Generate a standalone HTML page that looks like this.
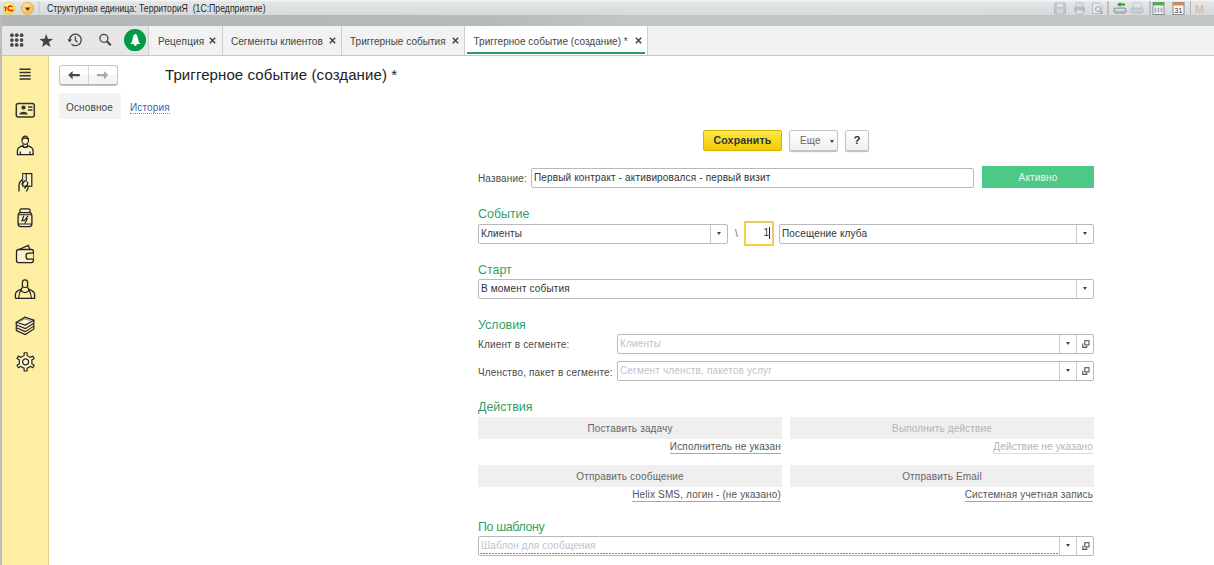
<!DOCTYPE html>
<html><head><meta charset="utf-8">
<style>
*{box-sizing:border-box;margin:0;padding:0}
html,body{width:1214px;height:565px;overflow:hidden;background:#fff;font-family:"Liberation Sans",sans-serif;font-size:10px;color:#333;letter-spacing:0.15px}
.abs{position:absolute}
#titlebar{left:0;top:0;width:1214px;height:15px;background:linear-gradient(#f6f7f8 0,#e4e7e8 2px,#d5d8d9 16px)}
#stripe{left:0;top:15px;width:1214px;height:11px;background:linear-gradient(90deg,#b2b6b7 0,#b6babb 40%,#c3c6c7 52%,#c2c5c6 100%)}
#toolbar{left:0;top:26px;width:1214px;height:30px;background:#f2f2f2;border-bottom:1px solid #c6c6c6}
#tbicons{left:0;top:26px;width:149px;height:29px;background:#e6e6e6;border-right:1px solid #cfcfcf}
#leftline{left:0;top:15px;width:2px;height:550px;background:#bcbcbc}
#sidebar{left:2px;top:56px;width:47px;height:509px;background:#fdeea2;border-right:1px solid #ddd08e}
.tab{position:absolute;top:26px;height:29px;border-right:1px solid #cfcfcf;line-height:30px;font-size:10px;color:#444;white-space:nowrap}
.tt{top:36px;font-size:10px;color:#444;white-space:nowrap;line-height:12px}
.hdr{position:absolute;left:478px;font-size:13.5px;color:#2f9f6a;margin-top:1px;letter-spacing:0;transform:scaleX(0.92);transform-origin:0 0;white-space:nowrap}
.lbl{position:absolute;font-size:10px;color:#4a4a4a;white-space:nowrap;margin-top:1px}
.inp{position:absolute;height:20px;border:1px solid #b9b9b9;border-radius:2px;background:#fff;font-size:10px;color:#333;line-height:18px;padding-left:2px;white-space:nowrap;overflow:hidden}
.dd{position:absolute;top:0;right:0;width:17px;height:18px;border-left:1px solid #c9c9c9}
.dd:after{content:"";position:absolute;left:5.5px;top:7px;border-left:2.5px solid transparent;border-right:2.5px solid transparent;border-top:3px solid #444}
.ph{color:#c0c3c8}
.dd2{position:absolute;top:0;right:17px;width:17px;height:18px;border-left:1px solid #c9c9c9}
.dd2:after{content:"";position:absolute;left:5.5px;top:7px;border-left:2.5px solid transparent;border-right:2.5px solid transparent;border-top:3px solid #444}
.op{position:absolute;top:0;right:0;width:17px;height:18px;border-left:1px solid #c9c9c9}
.abtn{position:absolute;height:22px;background:#efefef;text-align:center;line-height:23px;font-size:10px;color:#666}
.lnk{position:absolute;font-size:10px;color:#555;white-space:nowrap;line-height:12px;border-bottom:1px solid #a8a8a8}
</style></head><body>
<div id="titlebar" class="abs"></div>
<div id="stripe" class="abs"></div>
<div id="toolbar" class="abs"></div>
<div id="tbicons" class="abs"></div>
<div id="sidebar" class="abs"></div>
<div id="leftline" class="abs"></div>


<!-- titlebar icons -->
<svg class="abs" style="left:0;top:0" width="45" height="16" viewBox="0 0 45 16">
<defs><radialGradient id="g1c" cx="0.4" cy="0.3" r="0.8"><stop offset="0" stop-color="#fffbb0"/><stop offset="1" stop-color="#f5d600"/></radialGradient>
<radialGradient id="gdd" cx="0.4" cy="0.3" r="0.8"><stop offset="0" stop-color="#ffe49a"/><stop offset="1" stop-color="#f5b040"/></radialGradient></defs>
<circle cx="9" cy="8.3" r="6" fill="url(#g1c)" stroke="#e8c860" stroke-width="0.6"/>
<path d="M4.3 6.9 L6.4 5.9 L6.4 10.9 L4.9 10.9 L4.9 7.7 L4.3 7.9 Z" fill="#e3211b"/>
<path d="M12.2 7.2 A2.25 2.25 0 1 0 10 10.5 L13.4 10.5" fill="none" stroke="#e3211b" stroke-width="1.5"/>
<circle cx="27.5" cy="8.3" r="6.2" fill="url(#gdd)" stroke="#d9a850" stroke-width="0.6"/>
<path d="M24.8 7.6 L30.4 7.6 L27.6 10.9 Z" fill="#4a3a20"/>
<rect x="38.5" y="1" width="1" height="13" fill="#c4c6c8"/>
</svg>

<!-- right titlebar icons -->
<svg class="abs" style="left:1050px;top:0" width="164" height="16" viewBox="0 0 164 16">
<g opacity="0.55">
<rect x="4.5" y="3" width="11" height="11" rx="1" fill="#a9b6c6" stroke="#8a98a8" stroke-width="1"/>
<rect x="7" y="3.5" width="6" height="3.5" fill="#dfe5ec"/><rect x="7" y="9.5" width="6" height="4" fill="#c8d2dc"/>
<rect x="24" y="7" width="11" height="5" rx="1" fill="#98a4b0"/><rect x="26" y="3" width="7" height="4" fill="#dde3ea" stroke="#8a98a8" stroke-width="0.8"/><rect x="26" y="10" width="7" height="4" fill="#e8ecf0" stroke="#8a98a8" stroke-width="0.8"/>
<path d="M42.5 3 L49 3 L52 6 L52 13.5 L42.5 13.5 Z" fill="#eef1f4" stroke="#8a98a8" stroke-width="0.9"/>
<circle cx="48" cy="9" r="2.5" fill="none" stroke="#6a7888" stroke-width="1"/><path d="M49.8 10.8 L52.5 13.5" stroke="#6a7888" stroke-width="1.3"/>
</g>
<rect x="57.5" y="1" width="1" height="14" fill="#9aa0a6"/>
<rect x="64" y="8" width="12" height="5" rx="1.5" fill="#b8c0c8" stroke="#808890" stroke-width="0.8"/>
<path d="M66 9.8 H74" stroke="#fff" stroke-width="0.8"/>
<path d="M67 4.5 L70.5 2 L70.5 3.5 L75 3.5 L75 5.5 L70.5 5.5 L70.5 7 Z" fill="#28a028"/>
<g opacity="0.45"><rect x="81" y="8" width="12" height="5" rx="1.5" fill="#b8c0c8" stroke="#808890" stroke-width="0.8"/>
<path d="M83 3 L90 3 L92 5 L92 8 L83 8 Z" fill="#e8ecf0" stroke="#8a98a8" stroke-width="0.8"/></g>
<rect x="99.5" y="1" width="1" height="14" fill="#9aa0a6"/>
<rect x="103" y="2.5" width="11" height="12" fill="#f4f6f8" stroke="#7a8490" stroke-width="0.9"/>
<rect x="103" y="2.5" width="11" height="3" fill="#3cb84a"/>
<path d="M105.5 7 V13.5 M108.5 7 V13.5 M111.5 7 V13.5 M104 9 H113 M104 11 H113" stroke="#8a94a0" stroke-width="0.6"/>
<rect x="123" y="2.5" width="11" height="12" fill="#f8f8f8" stroke="#7a8490" stroke-width="0.9"/>
<rect x="123" y="2.5" width="11" height="3" fill="#e08a40"/>
<text x="128.5" y="12.8" font-size="7" text-anchor="middle" fill="#333" font-family="Liberation Sans">31</text>
<rect x="140" y="1" width="1" height="14" fill="#b0b4b8"/>
<text x="145" y="13" font-size="11" font-weight="bold" fill="#d8b8b0" font-family="Liberation Sans">M</text>
</svg>

<!-- toolbar icons -->
<svg class="abs" style="left:0;top:26px" width="149" height="29" viewBox="0 26 149 29">
<g fill="#444">
<circle cx="11.9" cy="35.2" r="1.85"/><circle cx="16.7" cy="35.2" r="1.85"/><circle cx="21.6" cy="35.2" r="1.85"/>
<circle cx="11.9" cy="40.1" r="1.85"/><circle cx="16.7" cy="40.1" r="1.85"/><circle cx="21.6" cy="40.1" r="1.85"/>
<circle cx="11.9" cy="44.9" r="1.85"/><circle cx="16.7" cy="44.9" r="1.85"/><circle cx="21.6" cy="44.9" r="1.85"/>
<path d="M46.20 34.00 L47.93 38.81 L53.05 38.98 L49.01 42.11 L50.43 47.02 L46.20 44.15 L41.97 47.02 L43.39 42.11 L39.35 38.98 L44.47 38.81 Z"/>
</g>
<g fill="none" stroke="#444" stroke-width="1.3">
<path d="M69.7 39.6 A5.8 5.8 0 1 1 71.4 44"/>
<path d="M75.4 36.2 V40.2 L77.4 42.2"/>
<circle cx="103.9" cy="38.3" r="4"/>
</g>
<path d="M67.3 39.2 L72.1 39.2 L69.7 42.4 Z" fill="#444"/>
<path d="M106.8 41.3 L110.8 45.3" stroke="#444" stroke-width="2.2"/>
<circle cx="135" cy="40.1" r="11" fill="#009b48"/>
<path d="M135.3 33.9 C134.2 33.9 133.5 35 133.1 37 L132 41.6 C131.7 42.7 131 43.4 130.1 44 L140.6 44 C139.7 43.4 139 42.7 138.7 41.6 L137.6 37 C137.2 35 136.5 33.9 135.3 33.9 Z M133.7 44 L137 44 C136.8 45.2 136 45.9 135.35 45.9 C134.7 45.9 133.9 45.2 133.7 44 Z" fill="#fff"/>
</svg>

<!-- sidebar icons -->
<svg class="abs" style="left:0;top:56px" width="48" height="330" viewBox="0 56 48 330">
<g stroke="#333" fill="none" stroke-width="1.3">
<path d="M19.5 69.2 H30.7 M19.5 72.5 H30.7 M19.5 75.7 H30.7 M19.5 79 H30.7" stroke-width="1.4"/>
<rect x="16.3" y="103.5" width="18" height="13.5" rx="2" stroke-width="1.5"/>
<path d="M28 107 H32.5 M28 110 H32.5" stroke-width="1.3"/>
</g>
<g fill="#333">
<circle cx="23.5" cy="107.6" r="2.1"/>
<path d="M19.3 114.6 C19.6 110.9 27.4 110.9 27.7 114.6 Z"/>
</g>
<g stroke="#222" fill="none" stroke-width="1.1">
<path d="M17.4 154.6 L17.5 150 C17.8 147.6 19.8 146.6 22.6 145.8 C23.5 147.8 27 147.8 27.9 145.8 C30.7 146.6 32.7 147.6 33 150 L33.1 154.6 Z" fill="#fdf6d2" stroke-width="1.3"/>
<path d="M22.6 145.8 C23.5 148.4 27 148.4 27.9 145.8" stroke-width="1.1"/>
<path d="M23 144 V146.2 M27.5 144 V146.2" stroke-width="1"/>
<ellipse cx="25.25" cy="140.3" rx="3.3" ry="4.1" fill="#fdf4c4" stroke-width="1.2"/>
<path d="M22.2 139.5 C23 137.5 27.5 137.5 28.3 139.5" stroke-width="1.3"/>
<path d="M20.4 154.6 V151.6 M29.9 154.6 V151.6" stroke-width="1.2"/>
</g>
<g stroke="#222" fill="none" stroke-width="1.1">
<rect x="22.8" y="173.6" width="9" height="12.6" fill="#fdf4c4" stroke-width="1.2"/>
<rect x="23.4" y="174.2" width="2.2" height="8" fill="#e8e2c0" stroke="none"/>
<path d="M26.3 173.6 V181" stroke-width="1.1"/>
<path d="M19 191.5 V185.5 C19 183 20.5 181 22.3 179.5" stroke-width="1.3"/>
<path d="M21.5 184.5 L24.5 181.2 C25.2 180.5 26 180.8 26 181.6" stroke-width="1.3"/>
<path d="M24.5 188.5 L27.5 184.5 C28.2 183.2 27.6 182 26.8 181.8" stroke-width="1.3"/>
<path d="M26.3 191.5 L27.9 188.6 C28.4 187.6 28 186.8 27.3 186.5" stroke-width="1.2"/>
</g>
<g stroke="#222" fill="none" stroke-width="1.2">
<rect x="19.9" y="208.8" width="10.2" height="3.8" rx="1.6" fill="#f6eec8" stroke-width="1.2"/>
<path d="M19.6 212.6 H30.4 C31.6 213.2 31.9 214.5 31.9 216 V223.5 C31.9 225.8 30.8 226.7 29 226.7 H21 C19.2 226.7 18.1 225.8 18.1 223.5 V216 C18.1 214.5 18.4 213.2 19.6 212.6 Z" fill="#fbf0bb" stroke-width="1.3"/>
<path d="M18.3 214.8 H31.7 M18.3 224 H31.7" stroke-width="1.1"/>
<path d="M23.8 215.6 L22 220.8 L25.2 220.2 M28 215.8 L25.6 219 L27.2 219 L24.6 223.5" stroke-width="1.2"/>
</g>
<g stroke="#222" fill="none" stroke-width="1.3">
<path d="M19 249.5 L28.3 245.3 L29.8 249.5" fill="#fbf2c6"/>
<path d="M16.5 251.5 C16.5 250 17.5 249.5 19 249.5 L31.5 249.5 C32.8 249.5 33.4 250.5 33.4 251.5 L33.4 260.8 C33.4 262 32.6 262.6 31.5 262.6 L18.5 262.6 C17.2 262.6 16.5 262 16.5 260.8 Z" fill="#fbf2c6"/>
<path d="M33.4 253.2 L28.5 253.2 C26.7 253.2 26 254.5 26 256.2 C26 258 26.7 259.2 28.5 259.2 L33.4 259.2" fill="#fdeea2"/>
</g>
<g stroke="#222" fill="none" stroke-width="1.2">
<path d="M22.4 287.6 V282.6 C22.4 280.6 23.5 279.9 25 279.9 C26.5 279.9 27.6 280.6 27.6 282.6 V287.6" stroke-width="1.3"/>
<path d="M15.4 298.3 V294.3 C15.6 291.6 17.6 290.4 21.1 289.3 C21.6 288.6 22 288.2 22.4 287.6 M27.6 287.6 C28 288.2 28.4 288.6 28.9 289.3 C32.4 290.4 34.4 291.6 34.6 294.3 V298.3 H15.4" stroke-width="1.3"/>
<path d="M21.1 289.3 C21.6 293.6 28.4 293.6 28.9 289.3" stroke-width="1.2"/>
<path d="M22.5 286.2 C23.2 287.9 26.8 287.9 27.5 286.2" stroke-width="1.1"/>
<path d="M21.1 289.6 C19.6 292 18.9 295 18.6 298.3 M28.9 289.6 C30.4 292 31.1 295 31.4 298.3" stroke-width="1.1"/>
</g>
<g stroke="#222" fill="none" stroke-width="1.1">
<path d="M16.3 322.2 V330.6 L25.3 334.5 L33.8 329 V320.2" fill="#fbefb8" stroke-width="1.2"/>
<path d="M16.3 325 L25.3 328.6 L33.8 323.2 M16.3 327.8 L25.3 331.6 L33.8 326.1" stroke-width="1.1"/>
<path d="M16.3 322.2 L24.9 317.2 L33.8 320.2 L25.3 325 Z" fill="#fdf6d4" stroke-width="1.2"/>
<path d="M19.5 321.5 L25 318.8 L30.5 320.7" stroke-width="0.8" stroke="#666"/>
</g>
<g stroke="#222" fill="#fdf4c8" stroke-width="1.15" stroke-linejoin="round" transform="translate(25.6 361.9)">
<path d="M-1.50 -6.20 L-1.45 -9.10 L1.45 -9.10 L1.50 -6.20 A6.2 6.2 0 0 1 4.62 -4.40 L7.16 -5.81 L8.61 -3.29 L6.12 -1.80 A6.2 6.2 0 0 1 6.12 1.80 L8.61 3.29 L7.16 5.81 L4.62 4.40 A6.2 6.2 0 0 1 1.50 6.20 L1.45 9.10 L-1.45 9.10 L-1.50 6.20 A6.2 6.2 0 0 1 -4.62 4.40 L-7.16 5.81 L-8.61 3.29 L-6.12 1.80 A6.2 6.2 0 0 1 -6.12 -1.80 L-8.61 -3.29 L-7.16 -5.81 L-4.62 -4.40 A6.2 6.2 0 0 1 -1.50 -6.20 Z"/>
<circle cx="0" cy="0" r="3" fill="none" stroke-width="1.2"/>
</g>
</svg>



<!-- title bar -->
<div class="abs" style="left:47px;top:1.8px;font-size:11px;color:#2a2a2a;line-height:12px;white-space:nowrap;transform:scaleX(0.79);letter-spacing:0;transform-origin:0 0">Структурная единица: ТерриториЯ&nbsp; (1С:Предприятие)</div>

<!-- tabs -->
<div class="tab" style="left:149px;width:74px"></div>
<div class="tab" style="left:223px;width:119px"></div>
<div class="tab" style="left:342px;width:123px"></div>
<div class="tab" style="left:465px;width:183px;background:#fff"></div>
<div class="abs" style="left:467px;top:51.5px;width:178px;height:2px;background:#2e9b5e"></div>
<div class="abs tt" style="left:158px">Рецепция</div>
<div class="abs tt" style="left:231px;letter-spacing:0.03px">Сегменты клиентов</div>
<div class="abs tt" style="left:350px;letter-spacing:0.03px">Триггерные события</div>
<div class="abs tt" style="left:473.5px;letter-spacing:0.05px">Триггерное событие (создание) *</div>
<svg class="abs" style="left:209.2px;top:36.5px" width="7" height="7" viewBox="0 0 7 7"><path d="M0.8 0.8 L6.2 6.2 M6.2 0.8 L0.8 6.2" stroke="#444" stroke-width="1.5"/></svg><svg class="abs" style="left:328.5px;top:36.5px" width="7" height="7" viewBox="0 0 7 7"><path d="M0.8 0.8 L6.2 6.2 M6.2 0.8 L0.8 6.2" stroke="#444" stroke-width="1.5"/></svg><svg class="abs" style="left:451.5px;top:36.5px" width="7" height="7" viewBox="0 0 7 7"><path d="M0.8 0.8 L6.2 6.2 M6.2 0.8 L0.8 6.2" stroke="#444" stroke-width="1.5"/></svg><svg class="abs" style="left:634.8px;top:36.5px" width="7" height="7" viewBox="0 0 7 7"><path d="M0.8 0.8 L6.2 6.2 M6.2 0.8 L0.8 6.2" stroke="#444" stroke-width="1.5"/></svg>
<!-- nav -->
<div class="abs" style="left:59px;top:65px;width:59px;height:19.5px;border:1px solid #c4c4c4;border-bottom-color:#b0b0b0;border-radius:3px;background:linear-gradient(#fff 50%,#f3f6f8 50%);box-shadow:0 1px 0.5px #c8c8c8"></div>
<div class="abs" style="left:88px;top:66px;width:1px;height:18px;background:#d6d6d6"></div>
<!-- nav arrows -->
<svg class="abs" style="left:59px;top:65px" width="60" height="21" viewBox="59 65 60 21">
<path d="M68.2 75.1 L72.6 71.1 L72.6 74 L79.8 74 L79.8 76.2 L72.6 76.2 L72.6 79.4 Z" fill="#4a4a4a"/>
<path d="M108.3 75.1 L103.9 71.1 L103.9 74 L96.9 74 L96.9 76.2 L103.9 76.2 L103.9 79.4 Z" fill="#a8a8a8"/>
</svg>
<div class="abs" style="left:165px;top:66px;font-size:15px;letter-spacing:0.1px;color:#222;white-space:nowrap">Триггерное событие (создание) *</div>

<div class="abs" style="left:59px;top:93px;width:62px;height:26px;background:#f2f2f2;border-radius:3px"></div>
<div class="abs" style="left:66px;top:102px;font-size:10px;color:#444">Основное</div>
<div class="abs" style="left:130px;top:102px;font-size:10px;color:#3b5fb0;border-bottom:1px dotted #6a8ad0;line-height:11px">История</div>

<!-- command bar -->
<div class="abs" style="left:703px;top:130px;width:79px;height:21px;background:linear-gradient(#fde84a,#f2cc00);border:1px solid #d4b000;border-radius:2px;text-align:center;line-height:19px;font-weight:bold;font-size:10.6px;color:#333">Сохранить</div>
<div class="abs" style="left:789px;top:130px;width:49px;height:21px;background:linear-gradient(#fff,#f0f0f0);border:1px solid #c4c4c4;border-radius:2px;box-shadow:0 1px 1px #bbb;line-height:19px;font-size:10px;color:#666;padding-left:10px">Еще<span class="abs" style="left:39.5px;top:9px;border-left:2.5px solid transparent;border-right:2.5px solid transparent;border-top:3px solid #444"></span></div>
<div class="abs" style="left:845px;top:130px;width:24px;height:21px;background:linear-gradient(#fff,#f0f0f0);border:1px solid #c4c4c4;border-radius:2px;box-shadow:0 1px 1px #bbb;line-height:19px;font-size:11.5px;font-weight:bold;color:#333;text-align:center;-webkit-text-stroke:0;font-weight:600">?</div>

<!-- Name -->
<div class="lbl" style="left:478px;top:172px">Название:</div>
<div class="inp" style="left:531px;top:168px;width:443px">Первый контракт - активировался - первый визит</div>
<div class="abs" style="left:982px;top:166px;width:112px;height:22px;background:#4dc987;color:#e9fbef;text-align:center;line-height:24px;font-size:10px">Активно</div>

<div class="hdr" style="top:205px">Событие</div>
<div class="inp" style="left:478px;top:224px;width:250px">Клиенты<div class="dd"></div></div>
<div class="lbl" style="left:735px;top:227px;color:#666">\</div>
<div class="abs" style="left:744px;top:221px;width:30px;height:25px;border:2px solid #f7d03a;border-top-color:#e6cc66;border-right-color:#e3cb70;background:#fff"></div><div class="abs" style="left:763.5px;top:227px;font-size:10px;line-height:12px;color:#333">1</div><div class="abs" style="left:769px;top:227px;width:1px;height:12px;background:#222"></div>
<div class="inp" style="left:779px;top:224px;width:315px">Посещение клуба<div class="dd"></div></div>

<div class="hdr" style="top:261px">Старт</div>
<div class="inp" style="left:478px;top:279px;width:616px">В момент события<div class="dd"></div></div>

<div class="hdr" style="top:316px">Условия</div>
<div class="lbl" style="left:478px;top:338px">Клиент в сегменте:</div>
<div class="inp ph" style="left:617px;top:334px;width:477px">Клиенты<div class="dd2"></div><div class="op"><svg width="17" height="18" viewBox="0 0 17 18" style="position:absolute;left:0;top:0"><rect x="7.8" y="5.7" width="4.2" height="4.2" fill="none" stroke="#555" stroke-width="1.1"/><path d="M5.8 8.6 V12.4 H9.7 V10.4" fill="none" stroke="#555" stroke-width="1.1"/></svg></div></div>
<div class="lbl" style="left:478px;top:366px">Членство, пакет в сегменте:</div>
<div class="inp ph" style="left:617px;top:361px;width:477px">Сегмент членств, пакетов услуг<div class="dd2"></div><div class="op"><svg width="17" height="18" viewBox="0 0 17 18" style="position:absolute;left:0;top:0"><rect x="7.8" y="5.7" width="4.2" height="4.2" fill="none" stroke="#555" stroke-width="1.1"/><path d="M5.8 8.6 V12.4 H9.7 V10.4" fill="none" stroke="#555" stroke-width="1.1"/></svg></div></div>

<div class="hdr" style="top:398px">Действия</div>
<div class="abtn" style="left:478px;top:417px;width:304px">Поставить задачу</div>
<div class="abtn" style="left:790px;top:417px;width:304px;color:#b4b4b4">Выполнить действие</div>
<div class="lnk" style="right:433px;top:440.5px">Исполнитель не указан</div>
<div class="lnk" style="right:121px;top:440.5px;color:#b4b4b4;border-bottom-color:#dcdcdc">Действие не указано</div>
<div class="abtn" style="left:478px;top:465px;width:304px">Отправить сообщение</div>
<div class="abtn" style="left:790px;top:465px;width:304px">Отправить Email</div>
<div class="lnk" style="right:433px;top:488.5px">Helix SMS, логин - (не указано)</div>
<div class="lnk" style="right:121px;top:488.5px">Системная учетная запись</div>

<div class="hdr" style="top:518px;letter-spacing:-0.4px">По шаблону</div>
<div class="inp ph" style="left:478px;top:536px;width:616px">Шаблон для сообщения<div class="abs" style="left:1px;top:16px;width:579px;height:1px;background:repeating-linear-gradient(90deg,#c86a6a 0 2px,transparent 2px 3px)"></div><div class="dd2"></div><div class="op"><svg width="17" height="18" viewBox="0 0 17 18" style="position:absolute;left:0;top:0"><rect x="7.8" y="5.7" width="4.2" height="4.2" fill="none" stroke="#555" stroke-width="1.1"/><path d="M5.8 8.6 V12.4 H9.7 V10.4" fill="none" stroke="#555" stroke-width="1.1"/></svg></div></div>

</body></html>
